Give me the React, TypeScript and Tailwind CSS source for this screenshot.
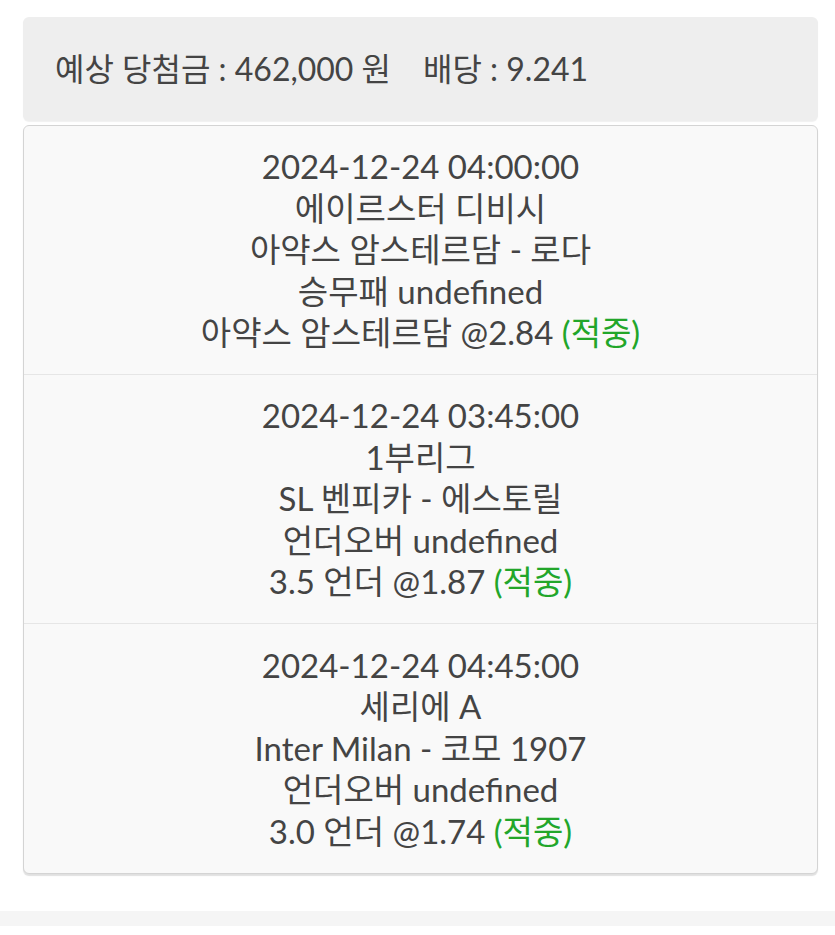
const rows = [
  {
    time: '2024-12-24 04:00:00',
    league: '에이르스터 디비시',
    match: '아약스 암스테르담 - 로다',
    market: '승무패 undefined',
    pick: '아약스 암스테르담 @2.84',
  },
  {
    time: '2024-12-24 03:45:00',
    league: '1부리그',
    match: 'SL 벤피카 - 에스토릴',
    market: '언더오버 undefined',
    pick: '3.5 언더 @1.87',
  },
  {
    time: '2024-12-24 04:45:00',
    league: '세리에 A',
    match: 'Inter Milan - 코모 1907',
    market: '언더오버 undefined',
    pick: '3.0 언더 @1.74',
  },
];

export default function App() {
  return (
    <div
      className="min-h-[935px] bg-white text-[#444444]"
      style={{ fontFamily: 'Lato, "Noto Sans CJK KR", sans-serif' }}
    >
      <div className="pl-[23px] pr-[17px] pt-[17px]">
        {/* HEADER */}
        <div className="flex h-[104px] items-center rounded-md bg-[#eeeeee] px-[32px] text-[32px] shadow-[0_1px_1px_rgba(0,0,0,0.06)]">
          <span>예상 당첨금 : 462,000 원</span>
          <span className="ml-[32px]">배당 : 9.241</span>
        </div>

        {/* BET LIST */}
        <div className="mt-[4px] overflow-hidden rounded-md border border-[#d4d4d4] bg-[#f9f9f9] shadow-[0_2px_1px_rgba(0,0,0,0.12)]">
          {rows.map((r, i) => (
            <div
              key={i}
              className={
                'flex h-[249px] flex-col items-center justify-center text-center text-[33px] leading-[41.5px] ' +
                (i < rows.length - 1 ? 'border-b border-[#e6e6e6]' : '')
              }
            >
              <div>{r.time}</div>
              <div>{r.league}</div>
              <div>{r.match}</div>
              <div>{r.market}</div>
              <div>
                {r.pick} <span className="text-[#22a62a]">(적중)</span>
              </div>
            </div>
          ))}
        </div>
      </div>

      <div className="mt-[37px] h-[15px] bg-[#f5f5f5]" />
    </div>
  );
}
